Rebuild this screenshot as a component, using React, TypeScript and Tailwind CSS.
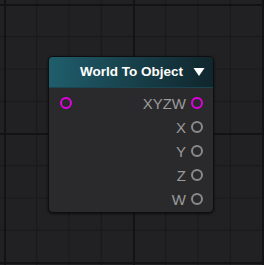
const outputs = [
  { label: 'XYZW', color: 'border-[#e200e2]' },
  { label: 'X', color: 'border-[#8a8a8a]' },
  { label: 'Y', color: 'border-[#8a8a8a]' },
  { label: 'Z', color: 'border-[#8a8a8a]' },
  { label: 'W', color: 'border-[#8a8a8a]' },
];

function Port({ color }: { color: string }) {
  return <span className={`block h-[12px] w-[12px] rounded-full border-[2.5px] ${color}`} />;
}

export default function App() {
  return (
    <div
      className="h-[265px] w-[264px] overflow-hidden bg-[#212124] pl-[48px] pt-[56px]"
      style={{
        backgroundImage:
          'linear-gradient(to right, #131315 2px, transparent 2px), linear-gradient(to bottom, #131315 2px, transparent 2px), linear-gradient(to right, #18181a 1px, transparent 1px), linear-gradient(to bottom, #18181a 1px, transparent 1px)',
        backgroundSize: '129px 129px, 129px 129px, 32.25px 32.25px, 32.25px 32.25px',
        backgroundPosition: '4px 4px, 4px 4px, 4px 4px, 4px 4px',
      }}
    >
      <div className="flex h-[157px] w-[166px] flex-col overflow-hidden rounded-[5px] border border-[#0e0e10] bg-[#2a2a2d] font-['Liberation_Sans',Arial,sans-serif] shadow-[0_1px_3px_rgba(0,0,0,0.6)]">
        <div className="flex h-[31px] items-center justify-end gap-[10px] border-b border-[#1b4550] bg-gradient-to-r from-[#1f5e6c] to-[#10262d] pr-[8px]">
          <span className="text-[13.5px] font-bold text-white">World To Object</span>
          <svg width="12" height="10" viewBox="0 0 12 10">
            <path d="M0.5 1 L11.5 1 L6 9 Z" fill="white" />
          </svg>
        </div>
        <div className="relative flex flex-col pt-[3px]">
          <span className="absolute left-[11px] top-[9px]">
            <Port color="border-[#e200e2]" />
          </span>
          {outputs.map((o) => (
            <div key={o.label} className="flex h-[24px] items-center justify-end gap-[5px] pr-[10px]">
              <span className="text-[15px] leading-none text-[#9a9a9a]">{o.label}</span>
              <Port color={o.color} />
            </div>
          ))}
        </div>
      </div>
    </div>
  );
}
